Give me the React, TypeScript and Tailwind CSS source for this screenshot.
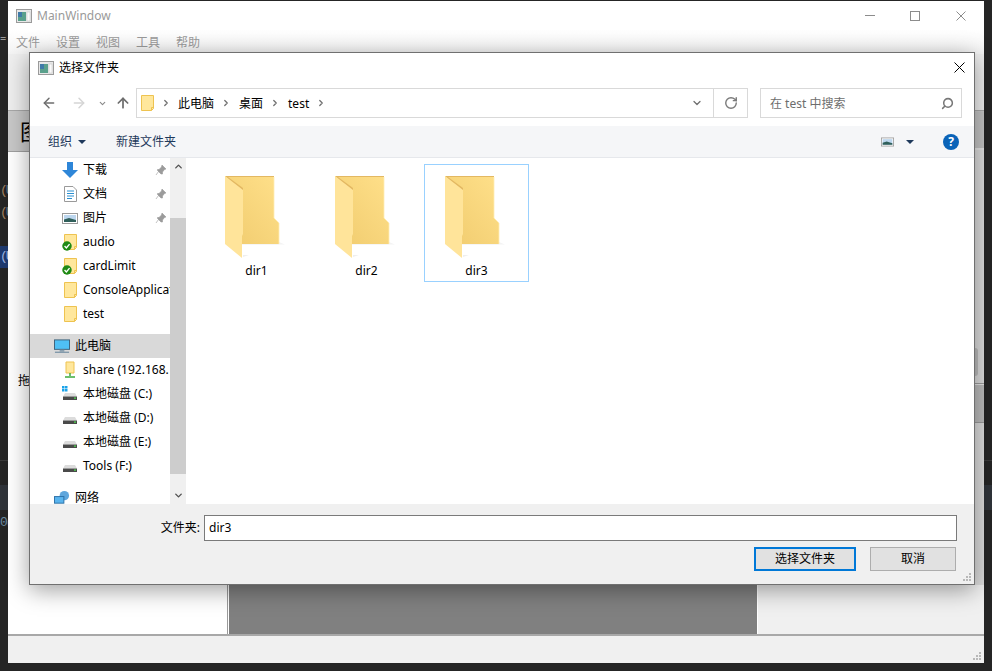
import { ArrowLeft, ArrowRight, ArrowUp, ChevronDown, ChevronRight, ChevronUp, RotateCw, Search } from "lucide-react";
import type { ReactNode } from "react";

const FONT = "[font-family:'Noto_Sans','Noto_Sans_CJK_SC',sans-serif]";

function AppIcon() {
  return (
    <svg width="16" height="14" viewBox="0 0 16 14" className="shrink-0">
      <rect x="0.5" y="0.5" width="15" height="13" fill="#e8e8e8" stroke="#9a9a9a" />
      <rect x="2" y="3" width="8" height="9" fill="#5aa08c" />
      <rect x="2" y="3" width="4" height="5" fill="#3f7aa8" />
      <rect x="11" y="3" width="3" height="9" fill="#fafafa" stroke="#c0c0c0" strokeWidth="0.5" />
    </svg>
  );
}

function CloseGlyph({ size, color, className }: { size: number; color: string; className?: string }) {
  return (
    <svg width={size} height={size} viewBox={`0 0 ${size} ${size}`} className={className}>
      <path d={`M0.5 0.5L${size - 0.5} ${size - 0.5}M${size - 0.5} 0.5L0.5 ${size - 0.5}`} stroke={color} strokeWidth="1" />
    </svg>
  );
}

function SmallFolder() {
  return (
    <svg width="13" height="16" viewBox="0 0 13 16" className="shrink-0">
      <path d="M.5.5H12.5V13.5L10.5 15.5H.5Z" fill="#ffe79c" stroke="#eec350" />
      <path d="M10.5 15.5V12.5H12.5" fill="none" stroke="#eec350" />
    </svg>
  );
}

function BigFolder() {
  return (
    <svg width="60" height="84" viewBox="0 0 60 84" className="shrink-0">
      <defs>
        <linearGradient id="backFill" x1="0" x2="1" y1="1" y2="0">
          <stop offset="0" stopColor="#f0cb6e" />
          <stop offset="1" stopColor="#ffe08a" />
        </linearGradient>
      </defs>
      <path d="M54 66L60 68.5H54Z" fill="#f3f3f3" />
      <path d="M17 68H54V69H17Z" fill="#f6f6f6" />
      <path d="M18 81L24 79H18Z" fill="#efefef" />
      <path d="M0 0H49V42L54 47V68H17V20Z" fill="url(#backFill)" />
      <path d="M0 0H49V1H3L18 12V18Z" fill="#e3b862" />
      <path d="M49 1V42L54 47V68" fill="none" stroke="#ffeeb5" strokeWidth="0.8" />
      <path d="M0 0L18 14V58L17 60V82L0 68Z" fill="#ffe49a" />
    </svg>
  );
}

function Drive({ windows }: { windows?: boolean }) {
  return (
    <svg width="16" height="16" viewBox="0 0 16 16" className="shrink-0">
      {windows && (
        <g fill="#1aa3ea">
          <rect x="0" y="0" width="2.5" height="2.5" />
          <rect x="3" y="0" width="2.5" height="2.5" />
          <rect x="0" y="3" width="2.5" height="2.5" />
          <rect x="3" y="3" width="2.5" height="2.5" />
        </g>
      )}
      <path d="M3 7H13L15 10.5H1Z" fill="#dcdcdc" />
      <rect x="1" y="10.5" width="14" height="3.5" fill="#4a4a4a" />
      <rect x="12" y="11.5" width="2" height="1.2" fill="#4de04d" />
    </svg>
  );
}

function Check() {
  return (
    <svg width="10" height="10" viewBox="0 0 11 11" className="absolute bottom-[3px] left-0">
      <circle cx="5.5" cy="5.5" r="5.2" fill="#1f8a14" />
      <path d="M2.8 5.6L4.8 7.6L8.3 3.4" fill="none" stroke="#fff" strokeWidth="1.5" />
    </svg>
  );
}

function Pin() {
  return (
    <svg width="12" height="12" viewBox="0 0 12 12" className="ml-auto mr-[3px] shrink-0">
      <path d="M7 1L11 5L9.5 5.5L7.5 8V10L6 10L2.5 6.5V5.5H4L6.5 3Z M3.5 7.5L1 11" fill="#9b9b9b" stroke="#9b9b9b" strokeWidth="0.6" />
    </svg>
  );
}

function PictureIcon({ w = 16, h = 11 }: { w?: number; h?: number }) {
  return (
    <svg width={w} height={h} viewBox="0 0 16 11" className="shrink-0">
      <rect x="0.5" y="0.5" width="15" height="10" fill="#fff" stroke="#9a9a9a" />
      <rect x="2" y="2" width="12" height="7" fill="#bcd6ee" />
      <path d="M2 6.5L7 5L14 7V9H2Z" fill="#2f5f5a" />
    </svg>
  );
}

function Row({ icon, label, pin, active, indent = true }: { icon: ReactNode; label: string; pin?: boolean; active?: boolean; indent?: boolean }) {
  return (
    <div className={`flex h-6 items-center overflow-hidden whitespace-nowrap ${active ? "bg-[#d9d9d9]" : ""} ${indent ? "pl-8" : "pl-6"}`}>
      <span className="relative mr-[5px] flex h-6 w-4 shrink-0 items-center justify-center">{icon}</span>
      <span>{label}</span>
      {pin && <Pin />}
    </div>
  );
}

function TreeSidebar() {
  return (
    <div className="flex w-[157px] shrink-0 text-[12px] text-black">
      <div className="w-[140px] shrink-0 overflow-hidden bg-white">
        <Row
          label="下载"
          pin
          icon={
            <svg width="16" height="18" viewBox="0 0 16 18">
              <path d="M5 1H11V9H16L8 17L0 9H5Z" fill="#2e86d8" />
            </svg>
          }
        />
        <Row
          label="文档"
          pin
          icon={
            <svg width="13" height="16" viewBox="0 0 13 16">
              <path d="M.5.5H9L12.5 4V15.5H.5Z" fill="#fff" stroke="#9a9a9a" />
              <path d="M3 5H10M3 7.5H10M3 10H10M3 12.5H8" stroke="#2a8fd0" />
            </svg>
          }
        />
        <Row label="图片" pin icon={<PictureIcon />} />
        <Row label="audio" icon={<><SmallFolder /><Check /></>} />
        <Row label="cardLimit" icon={<><SmallFolder /><Check /></>} />
        <Row label="ConsoleApplication" icon={<SmallFolder />} />
        <Row label="test" icon={<SmallFolder />} />
        <div className="h-2" />
        <Row
          label="此电脑"
          active
          indent={false}
          icon={
            <svg width="17" height="15" viewBox="0 0 17 15">
              <rect x="0.5" y="0.5" width="16" height="10" fill="#4fc0f5" stroke="#3d5f78" />
              <rect x="6" y="11" width="5" height="2" fill="#8aa0b0" />
              <rect x="1" y="13" width="15" height="1.2" fill="#6f8ba0" />
            </svg>
          }
        />
        <Row
          label="share (192.168."
          icon={
            <svg width="14" height="18" viewBox="0 0 14 18">
              <path d="M3 1H11V12H3Z" fill="#ffe79c" stroke="#eec350" />
              <path d="M7 12V15M2 16H12" stroke="#3caa3c" strokeWidth="1.5" />
            </svg>
          }
        />
        <Row label="本地磁盘 (C:)" icon={<Drive windows />} />
        <Row label="本地磁盘 (D:)" icon={<Drive />} />
        <Row label="本地磁盘 (E:)" icon={<Drive />} />
        <Row label="Tools (F:)" icon={<Drive />} />
        <div className="h-2" />
        <Row
          label="网络"
          indent={false}
          icon={
            <svg width="17" height="16" viewBox="0 0 17 16">
              <circle cx="11" cy="5.5" r="5" fill="#5ea6dc" />
              <rect x="0.5" y="6.5" width="10" height="7" fill="#59b4ee" stroke="#2a6ea5" />
            </svg>
          }
        />
      </div>
      <div className="flex w-[16px] shrink-0 flex-col bg-[#f0f0f0] text-[#505050]">
        <div className="flex h-[17px] items-center justify-center">
          <ChevronUp size={11} strokeWidth={3} />
        </div>
        <div className="mt-[43px] h-[256px] bg-[#cdcdcd]" />
        <div className="mt-auto flex h-[17px] items-center justify-center">
          <ChevronDown size={11} strokeWidth={3} />
        </div>
      </div>
    </div>
  );
}

function FolderItem({ name, selected }: { name: string; selected?: boolean }) {
  return (
    <div className={`flex h-[118px] w-[105px] flex-col border pl-5 pt-[11px] ${selected ? "border-[#99d1ff]" : "border-transparent"}`}>
      <BigFolder />
      <div className="-ml-5 mt-[2px] text-center text-[12px] leading-[18px] text-black">{name}</div>
    </div>
  );
}

function Crumb({ label }: { label: string }) {
  return (
    <>
      <span className="pt-px text-[12px] text-black">{label}</span>
      <ChevronRight size={10} strokeWidth={3} className="ml-[7px] mr-[8px] text-[#707070]" />
    </>
  );
}

function Caret({ color = "#1e395b" }: { color?: string }) {
  return (
    <svg width="8" height="4" viewBox="0 0 8 4" className="shrink-0">
      <path d="M0 0H8L4 4Z" fill={color} />
    </svg>
  );
}

function Grip({ className }: { className: string }) {
  return (
    <svg width="9" height="9" viewBox="0 0 9 9" className={className}>
      <g fill="#b8b8b8">
        <rect x="6" y="0" width="2" height="2" />
        <rect x="3" y="3" width="2" height="2" />
        <rect x="6" y="3" width="2" height="2" />
        <rect x="0" y="6" width="2" height="2" />
        <rect x="3" y="6" width="2" height="2" />
        <rect x="6" y="6" width="2" height="2" />
      </g>
    </svg>
  );
}

function FileDialog() {
  return (
    <div className="absolute left-[29px] top-[52px] flex h-[533px] w-[946px] flex-col border border-[#707070] bg-white shadow-[0_5px_22px_rgba(0,0,0,0.38)]">
      {/* Title */}
      <div className="flex h-[29px] shrink-0 items-center pl-2 pr-[9px] text-[12px] text-black">
        <AppIcon />
        <span className="ml-[5px]">选择文件夹</span>
        <CloseGlyph size={11} color="#000" className="ml-auto" />
      </div>

      {/* Nav row */}
      <div className="flex h-[44px] shrink-0 items-start pt-[6px]">
        <div className="flex h-[30px] w-[106px] items-center pl-[11px]">
          <ArrowLeft size={16} strokeWidth={2.2} className="text-[#6e6e6e]" />
          <ArrowRight size={16} strokeWidth={2.2} className="ml-[14px] text-[#d5d5d5]" />
          <ChevronDown size={9} strokeWidth={3} className="ml-[11px] text-[#8a8a8a]" />
          <ArrowUp size={16} strokeWidth={2.6} className="ml-[8px] text-[#6e6e6e]" />
        </div>
        <div className="flex h-[30px] w-[612px] items-center border border-[#d9d9d9] pl-1">
          <SmallFolder />
          <ChevronRight size={10} strokeWidth={3} className="ml-[7px] mr-[7px] text-[#707070]" />
          <Crumb label="此电脑" />
          <Crumb label="桌面" />
          <Crumb label="test" />
          <ChevronDown size={12} strokeWidth={2.6} className="ml-auto mr-[10px] text-[#707070]" />
          <div className="flex h-full w-[34px] items-center justify-center border-l border-[#d9d9d9]">
            <RotateCw size={14} strokeWidth={2.4} className="text-[#7a7a7a]" />
          </div>
        </div>
        <div className="ml-3 flex h-[30px] w-[202px] items-center border border-[#d9d9d9] pl-[9px] pr-[7px] text-[12px] text-[#6d6d6d]">
          <span className="pt-px">在 test 中搜索</span>
          <Search size={13} strokeWidth={2.8} className="ml-auto -scale-x-100 text-[#777]" />
        </div>
      </div>

      {/* Toolbar */}
      <div className="flex h-[32px] shrink-0 items-center border-b border-[#e6e8ec] bg-[#f5f6f8] pl-[18px] pr-[15px] text-[12px] text-[#1e395b]">
        <span>组织</span>
        <span className="ml-[6px]"><Caret /></span>
        <span className="ml-[30px]">新建文件夹</span>
        <span className="ml-auto"><PictureIcon w={13} h={10} /></span>
        <span className="ml-[12px]"><Caret /></span>
        <span className="ml-[29px] flex h-4 w-4 items-center justify-center rounded-full bg-[#0a63b8] text-[12px] font-bold leading-none text-white">?</span>
      </div>

      {/* Body */}
      <div className="flex h-[346px] shrink-0">
        <TreeSidebar />
        <div className="flex flex-1 items-start gap-[5px] bg-white pl-[17px] pt-[6px]">
          <FolderItem name="dir1" />
          <FolderItem name="dir2" />
          <FolderItem name="dir3" selected />
        </div>
      </div>

      {/* Footer */}
      <div className="relative flex-1 bg-[#f0f0f0] pr-[17px] pt-[11px] text-[12px] text-black">
        <div className="flex h-[26px] items-center justify-end">
          <span className="mr-1">文件夹:</span>
          <div className="flex h-[26px] w-[753px] items-center border border-[#7a7a7a] bg-white pl-1">dir3</div>
        </div>
        <div className="mt-[6px] flex justify-end pr-px">
          <button className="h-[24px] w-[102px] border-2 border-[#0078d7] bg-[#e1e1e1] text-[12px]">选择文件夹</button>
          <button className="ml-[14px] h-[24px] w-[86px] border border-[#adadad] bg-[#e1e1e1] text-[12px]">取消</button>
        </div>
        <Grip className="absolute bottom-[2px] right-[2px]" />
      </div>
    </div>
  );
}

function MainWindow() {
  return (
    <div className="absolute left-2 top-px flex h-[662px] w-[976px] flex-col bg-[#f0f0f0]">
      <div className="flex h-[29px] shrink-0 items-center bg-white pl-2 text-[12px] text-[#9a9a9a]">
        <AppIcon />
        <span className="ml-[5px]">MainWindow</span>
        <div className="ml-auto flex items-center">
          <span className="mr-[35px] h-px w-[10px] bg-[#8c8c8c]" />
          <span className="mr-[36px] h-[10px] w-[10px] border border-[#8c8c8c]" />
          <CloseGlyph size={10} color="#8c8c8c" className="mr-[18px]" />
        </div>
      </div>
      <div className="flex h-[24px] shrink-0 items-center gap-4 bg-gradient-to-b from-white to-[#f4f4f4] pl-2 pt-[2px] text-[12px] text-[#9a9a9a]">
        <span>文件</span>
        <span>设置</span>
        <span>视图</span>
        <span>工具</span>
        <span>帮助</span>
      </div>
      <div className="h-[57px] shrink-0 border-b border-[#a8a8a8] bg-[#efefef]" />
      <div className="flex h-[41px] shrink-0 items-center border-b border-[#a0a0a0] bg-[#c8c8c8] pl-3 text-[22px] text-black">图</div>
      <div className="flex min-h-0 flex-1 border-b-2 border-[#a8a8a8]">
        <div className="relative w-[220px] shrink-0 border-r border-[#9a9a9a] bg-white">
          <span className="absolute left-[10px] top-[220px] text-[12px] text-black">拖</span>
        </div>
        <div className="flex flex-1 flex-col justify-end">
          <div className="h-[50px] w-[530px] border-x border-white bg-[#808080]" />
        </div>
      </div>
      <div className="relative h-[27px] shrink-0 bg-[#f0f0f0]">
        <Grip className="absolute bottom-[2px] right-[2px]" />
      </div>
      {/* right strip beside the dialog */}
      <div className="absolute right-0 top-[111px] flex w-[10px] flex-col">
        <div className="h-[36px] bg-[#c4c4c4]" />
        <div className="h-[2px] bg-[#e6e6e6]" />
        <div className="relative h-[233px] bg-[#dcdcdc]">
          <div className="absolute left-px top-[198px] h-[28px] w-[3px] rounded-r-sm bg-[#bcbcbc]" />
        </div>
        <div className="h-[2px] border-t border-[#9c9c9c] bg-[#e6e6e6]" />
        <div className="h-[37px] bg-[#bcbcbc]" />
        <div className="h-px bg-[#9c9c9c]" />
        <div className="h-[162px] bg-[#dcdcdc]" />
      </div>
    </div>
  );
}

export default function App() {
  return (
    <div className={`relative h-[671px] w-[992px] overflow-hidden bg-[#252525] ${FONT}`}>
      {/* editor peeking out behind the window */}
      <div className="absolute left-0 top-[30px] text-[11px] text-[#9a9a9a]">=</div>
      <div className="absolute inset-x-0 top-[460px] h-px bg-[#3a3a3a]" />
      <div className="absolute left-0 top-[485px] h-[25px] w-full bg-[#2f3339]" />
      <div className="absolute left-0 top-[180px] whitespace-nowrap font-mono text-[13px] leading-[22px] tracking-[-2px] text-[#a08060]">
        <div>(<span className="text-[#5a7a90]">U</span></div>
        <div>(<span className="text-[#5a7a90]">U</span></div>
        <div className="mt-[22px] w-2 bg-[#1f3a6e] text-[#9db4e0]">(U</div>
      </div>
      <div className="absolute left-0 top-[512px] whitespace-nowrap font-mono text-[13px] leading-[22px] tracking-[-2px] text-[#6a8aa0]">0(</div>
      <MainWindow />
      <FileDialog />
    </div>
  );
}
